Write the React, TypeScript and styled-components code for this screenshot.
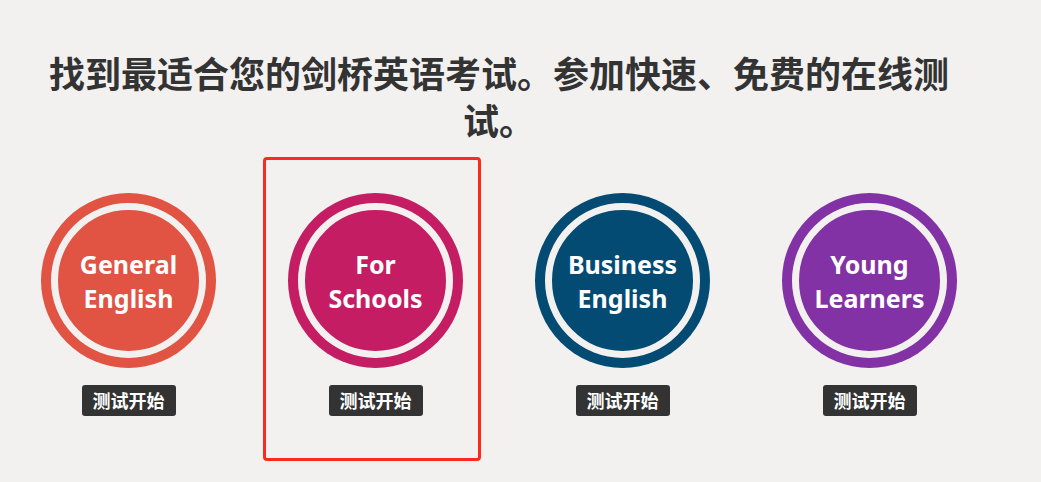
import styled, { createGlobalStyle } from "styled-components"

const GlobalStyle = createGlobalStyle`
    html, body {
        margin: 0;
        padding: 0;
        background: #f2f1f0;
    }
    body {
        font-family: "Noto Sans", "Noto Sans CJK SC", sans-serif;
    }
`

export const Page = styled.div`
    width: 988px;
    padding: 49px 0 0 5px;
`
export const Title = styled.h1`
    margin: 0;
    padding: 0 20px;
    font-family: "Noto Sans CJK SC", "Noto Sans", sans-serif;
    font-size: 36px;
    line-height: 47px;
    font-weight: 700;
    color: #333;
    text-align: center;
`
export const Grid = styled.div`
    display: grid;
    grid-template-columns: repeat(4, 247px);
    margin-top: 14px;
`
export const Card = styled.div<{ $selected?: boolean }>`
    width: 218px;
    box-sizing: border-box;
    margin-left: 11px;
    padding: 33px 0 42px 7px;
    border: 3px solid ${(p) => (p.$selected ? "#fc2a1d" : "transparent")};
    border-radius: 4px;
    display: flex;
    flex-direction: column;
    align-items: center;
`
export const Ring = styled.div<{ $color: string }>`
    width: 175px;
    height: 175px;
    box-sizing: border-box;
    padding: 10px;
    border-radius: 50%;
    background: ${(p) => p.$color};
`
export const Disc = styled.div<{ $color: string }>`
    width: 100%;
    height: 100%;
    box-sizing: border-box;
    border: 7px solid #f2f1f0;
    border-radius: 50%;
    background: ${(p) => p.$color};
    display: flex;
    align-items: center;
    justify-content: center;
    text-align: center;
    color: #fff;
    font-family: "Noto Sans", sans-serif;
    font-weight: 700;
    font-size: 25px;
    line-height: 34px;
`
export const StartButton = styled.button`
    margin-top: 17px;
    height: 31px;
    padding: 0 11px;
    border: 0;
    border-radius: 3px;
    background: #333;
    color: #fff;
    font-family: "Noto Sans CJK SC", sans-serif;
    font-weight: 700;
    font-size: 18px;
    line-height: 31px;
    cursor: pointer;
`

const exams = [
  { label: ["General", "English"], color: "#e15342" },
  { label: ["For", "Schools"], color: "#c51d63", selected: true },
  { label: ["Business", "English"], color: "#034b73" },
  { label: ["Young", "Learners"], color: "#8232a4" },
]

const App = () => {
  return (
    <>
      <GlobalStyle />
      <Page>
        <Title>找到最适合您的剑桥英语考试。参加快速、免费的在线测试。</Title>
        <Grid>
          {exams.map((e) => (
            <Card key={e.label.join(" ")} $selected={e.selected}>
              <Ring $color={e.color}>
                <Disc $color={e.color}>
                  <div>
                    {e.label[0]}
                    <br />
                    {e.label[1]}
                  </div>
                </Disc>
              </Ring>
              <StartButton>测试开始</StartButton>
            </Card>
          ))}
        </Grid>
      </Page>
    </>
  )
}

export default App
